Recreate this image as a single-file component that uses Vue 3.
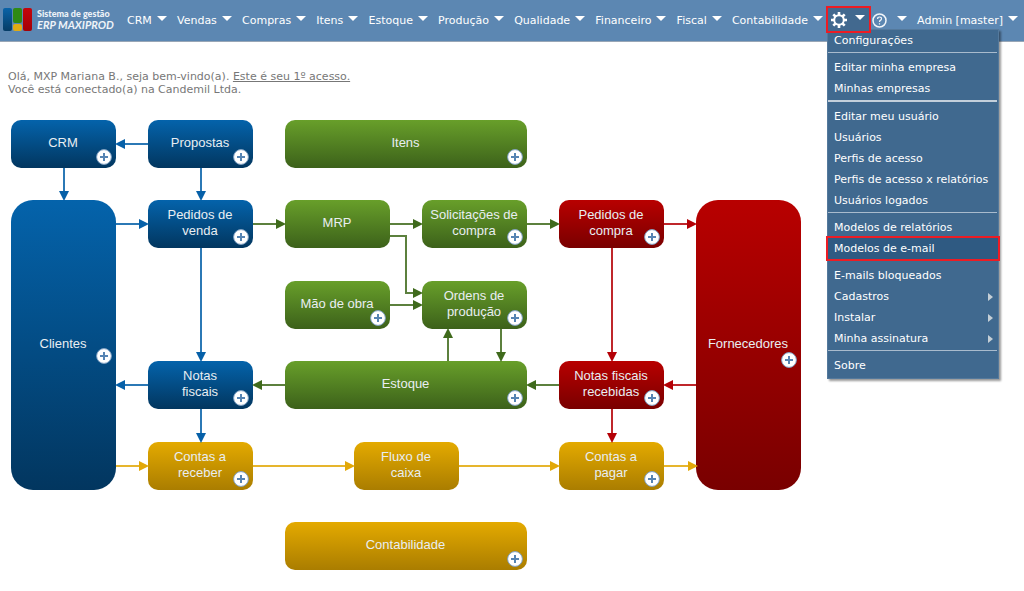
<script setup>
const menus = ['CRM', 'Vendas', 'Compras', 'Itens', 'Estoque', 'Produção', 'Qualidade', 'Financeiro', 'Fiscal', 'Contabilidade']

const groups = [
  [{ t: 'Configurações' }],
  [{ t: 'Editar minha empresa' }, { t: 'Minhas empresas' }],
  [{ t: 'Editar meu usuário' }, { t: 'Usuários' }, { t: 'Perfis de acesso' }, { t: 'Perfis de acesso x relatórios' }, { t: 'Usuários logados' }],
  [{ t: 'Modelos de relatórios' }, { t: 'Modelos de e-mail', on: true }],
  [{ t: 'E-mails bloqueados' }, { t: 'Cadastros', sub: true }, { t: 'Instalar', sub: true }, { t: 'Minha assinatura', sub: true }],
  [{ t: 'Sobre' }],
]

const nodes = [
  { t: ['CRM'], c: 'blue', x: 0, y: 0, plus: true },
  { t: ['Propostas'], c: 'blue', x: 137, y: 0, plus: true },
  { t: ['Itens'], c: 'green', x: 274, y: 0, w: 242, plus: true },
  { t: ['Clientes'], c: 'blue', x: 0, y: 80, h: 290, plus: true },
  { t: ['Pedidos de', 'venda'], c: 'blue', x: 137, y: 80, plus: true },
  { t: ['MRP'], c: 'green', x: 274, y: 80 },
  { t: ['Solicitações de', 'compra'], c: 'green', x: 411, y: 80, plus: true },
  { t: ['Pedidos de', 'compra'], c: 'red', x: 548, y: 80, plus: true },
  { t: ['Fornecedores'], c: 'red', x: 685, y: 80, h: 290, plus: true },
  { t: ['Mão de obra'], c: 'green', x: 274, y: 161, plus: true },
  { t: ['Ordens de', 'produção'], c: 'green', x: 411, y: 161, plus: true },
  { t: ['Notas', 'fiscais'], c: 'blue', x: 137, y: 241, plus: true },
  { t: ['Estoque'], c: 'green', x: 274, y: 241, w: 242, plus: true },
  { t: ['Notas fiscais', 'recebidas'], c: 'red', x: 548, y: 241, plus: true },
  { t: ['Contas a', 'receber'], c: 'gold', x: 137, y: 322, plus: true },
  { t: ['Fluxo de', 'caixa'], c: 'gold', x: 343, y: 322 },
  { t: ['Contas a', 'pagar'], c: 'gold', x: 548, y: 322, plus: true },
  { t: ['Contabilidade'], c: 'gold', x: 274, y: 402, w: 242, plus: true },
]

const place = (n) => ({
  left: n.x + 'px',
  top: n.y + 'px',
  width: (n.w || 105) + 'px',
  height: (n.h || 48) + 'px',
})

const colors = { blue: '#0660a8', green: '#3f6a1c', red: '#b40006', gold: '#e2a808' }
const links = [
  ['blue', [137, 24], [104, 24]],
  ['blue', [53, 48], [53, 81]],
  ['blue', [190, 48], [190, 81]],
  ['blue', [190, 128], [190, 242]],
  ['blue', [190, 289], [190, 323]],
  ['blue', [105, 104], [138, 104]],
  ['blue', [137, 265], [104, 265]],
  ['gold', [105, 346], [138, 346]],
  ['green', [242, 104], [275, 104]],
  ['green', [379, 104], [412, 104]],
  ['green', [379, 116], [395, 116], [395, 173], [412, 173]],
  ['green', [379, 185], [412, 185]],
  ['green', [516, 104], [549, 104]],
  ['green', [548, 265], [515, 265]],
  ['green', [274, 265], [241, 265]],
  ['green', [437, 241], [437, 208]],
  ['green', [490, 209], [490, 242]],
  ['red', [653, 104], [686, 104]],
  ['red', [601, 128], [601, 242]],
  ['red', [601, 289], [601, 323]],
  ['red', [685, 265], [652, 265]],
  ['gold', [242, 346], [344, 346]],
  ['gold', [448, 346], [549, 346]],
  ['gold', [653, 346], [687, 346]],
].map(([c, ...pts]) => {
  const [x, y] = pts[pts.length - 1]
  const [px, py] = pts[pts.length - 2]
  const dx = Math.sign(x - px)
  const dy = Math.sign(y - py)
  const bx = x - dx * 10
  const by = y - dy * 10
  return {
    color: colors[c],
    line: [...pts.slice(0, -1), [bx, by]].join(' '),
    head: `${x},${y} ${bx + dy * 5},${by + dx * 5} ${bx - dy * 5},${by - dx * 5}`,
  }
})
</script>

<template>
  <header class="bar">
    <a class="brand" href="#" aria-label="Sistema de gestão ERP MAXIPROD">
      <svg class="logo" width="30" height="24" viewBox="0 0 30 24" aria-hidden="true">
        <defs>
          <linearGradient id="lb" x2="0" y2="1"><stop stop-color="#0963a8" /><stop offset="1" stop-color="#063c66" /></linearGradient>
          <linearGradient id="lr" x2="0" y2="1"><stop stop-color="#c4050b" /><stop offset="1" stop-color="#a30006" /></linearGradient>
        </defs>
        <rect width="9" height="23" rx="2" fill="url(#lb)" />
        <rect x="10" width="9" height="15" rx="2" fill="#2f8a14" />
        <rect x="10" y="16" width="9" height="7" rx="2" fill="#e0ab13" />
        <rect x="20" width="9" height="23" rx="2" fill="url(#lr)" />
      </svg>
      <span class="name"><b>Sistema de gestão</b><i>ERP MAXIPROD</i></span>
    </a>
    <nav class="nav">
      <button v-for="m in menus" :key="m" class="item" type="button">{{ m }}<span class="caret"></span></button>
    </nav>
    <div class="settings">
      <button class="gear" type="button" aria-label="Configurações" aria-expanded="true">
        <svg width="16" height="16" viewBox="0 0 16 16" aria-hidden="true">
          <path d="M8 0V4M8 12V16M0 8H4M12 8H16M2.3 2.3L5 5M11 11L13.7 13.7M2.3 13.7L5 11M11 5L13.7 2.3" stroke="#fff" stroke-width="2.6" />
          <circle cx="8" cy="8" r="4.8" fill="#42698f" stroke="#fff" stroke-width="2" />
        </svg>
        <span class="caret"></span>
      </button>
      <div class="menu">
        <ul v-for="(g, i) in groups" :key="i" class="group">
          <li v-for="o in g" :key="o.t">
            <a href="#" :class="{ on: o.on }">{{ o.t }}<span v-if="o.sub" class="sub"></span></a>
          </li>
        </ul>
      </div>
    </div>
    <button class="item help" type="button" aria-label="Ajuda">
      <svg width="15" height="15" viewBox="0 0 15 15" aria-hidden="true">
        <circle cx="7.5" cy="7.5" r="6.5" fill="none" stroke="#f2f6fa" stroke-width="1.5" />
        <path d="M5.6 6Q5.6 4 7.6 4T9.5 5.8Q9.5 6.8 8.4 7.4Q7.5 7.9 7.5 9M7.5 10.2V11.6" fill="none" stroke="#f2f6fa" stroke-width="1.2" />
      </svg>
      <span class="caret"></span>
    </button>
    <button class="item user" type="button">Admin [master]<span class="caret"></span></button>
  </header>

  <main>
    <p class="hello">
      Olá, MXP Mariana B., seja bem-vindo(a). <a href="#">Este é seu 1º acesso.</a><br />
      Você está conectado(a) na Candemil Ltda.
    </p>
    <section class="flow" aria-label="Fluxo do sistema">
      <div v-for="n in nodes" :key="n.t.join(' ')" class="node" :class="[n.c, { tall: n.h }]" :style="place(n)">
        <a href="#"><span v-for="l in n.t" :key="l">{{ l }}</span></a>
        <button v-if="n.plus" class="plus" :class="{ low: n.t[0] === 'Fornecedores' }" type="button" :aria-label="'Adicionar em ' + n.t.join(' ')">
          <svg width="16" height="16" viewBox="0 0 16 16" aria-hidden="true">
            <circle cx="8" cy="8" r="7.4" fill="#fff" stroke="#7e9fc2" stroke-width="1" />
            <path d="M8 4V12M4 8H12" stroke="#5684b3" stroke-width="2" />
          </svg>
        </button>
      </div>
      <svg class="links" width="790" height="450" viewBox="0 0 790 450" aria-hidden="true">
        <g v-for="(l, i) in links" :key="i">
          <polyline :points="l.line" fill="none" :stroke="l.color" stroke-width="2" stroke-opacity="0.85" />
          <polygon :points="l.head" :fill="l.color" />
        </g>
      </svg>
    </section>
  </main>
</template>

<style>
body {
  background: #fff;
}
</style>

<style scoped>
.bar,
main,
.bar button {
  font-family: "DejaVu Sans", Verdana, sans-serif;
  font-size: 11px;
}
button {
  margin: 0;
  padding: 0;
  border: 0;
  background: none;
  color: inherit;
  cursor: pointer;
}
a {
  color: inherit;
}
.bar {
  display: flex;
  align-items: flex-start;
  height: 41px;
  background: #5c87b2;
  border-bottom: 1px solid #98a6b6;
  color: #fff;
}
.brand {
  display: flex;
  flex: none;
  gap: 4px;
  width: 124px;
  padding: 8px 0 0 3px;
  box-sizing: border-box;
  text-decoration: none;
}
.name {
  display: flex;
  flex-direction: column;
  font-family: Lato, sans-serif;
  font-weight: 700;
  line-height: 12px;
  white-space: nowrap;
  color: #eef3f8;
}
.name b {
  font-size: 9px;
  line-height: 11px;
}
.name i {
  font-size: 11px;
}
.nav {
  display: flex;
  flex: 1;
  justify-content: space-between;
}
.item {
  display: flex;
  align-items: center;
  gap: 5px;
  height: 40px;
  padding: 0 3px;
  white-space: nowrap;
}
.caret {
  border: 5px solid transparent;
  border-top-color: #fff;
  border-bottom: 0;
  margin-bottom: 4px;
}
.settings {
  position: relative;
  margin-top: 6px;
}
.gear {
  position: relative;
  z-index: 2;
  display: flex;
  align-items: center;
  gap: 8px;
  height: 27px;
  padding: 0 4px 0 3px;
  background: #42698f;
  border: 2px solid #ed1c24;
}
.bar .help {
  gap: 10px;
  padding: 0 7px 0 1px;
}
.bar .user {
  padding-right: 6px;
}
.menu {
  position: absolute;
  z-index: 1;
  top: 23px;
  left: 1px;
  width: 172px;
  box-sizing: border-box;
  padding-bottom: 2px;
  background: #40698f;
  border: 1px solid #54799c;
  box-shadow: 2px 2px 2px rgba(0, 0, 0, 0.4);
}
.group {
  list-style: none;
  margin: 0 1px 0 0;
  padding: 0;
}
.group + .group {
  margin-top: 1px;
  padding-top: 4px;
  border-top: 1px solid #a9bbcd;
}
.group:nth-child(3) {
  border-top: 2px solid #c3cfdb;
}
.group a {
  display: flex;
  align-items: center;
  justify-content: space-between;
  height: 21px;
  padding: 0 4px 0 6px;
  text-decoration: none;
  white-space: nowrap;
}
.group .on {
  background: #2f5a82;
  outline: 2px solid #ed1c24;
  margin-right: -1px;
}
.sub {
  border: 4px solid transparent;
  border-left: 5px solid #c5cfd6;
  border-right: 0;
}
.hello {
  margin: 0;
  padding: 28px 8px 0;
  line-height: 13px;
  color: #777;
}
.flow {
  position: relative;
  height: 450px;
  margin: 24px 0 0 11px;
}
.node {
  position: absolute;
  border-radius: 10px;
  font-family: "Liberation Sans", Arial, sans-serif;
  font-size: 13px;
  line-height: 16px;
  color: #e9eef2;
}
.node a {
  display: flex;
  flex-direction: column;
  align-items: center;
  justify-content: center;
  height: 100%;
  padding: 0 1px 2px 0;
  box-sizing: border-box;
  text-decoration: none;
  white-space: nowrap;
}
.tall {
  border-radius: 22px;
}
.blue {
  background: linear-gradient(#0463ab, #02365f);
}
.green {
  background: linear-gradient(#689f2a, #3c611a);
}
.red {
  background: linear-gradient(#b80000, #790000);
}
.gold {
  background: linear-gradient(#e4aa00, #aa7d00);
}
.plus {
  position: absolute;
  right: 4px;
  bottom: 3px;
  height: 16px;
}
.plus svg {
  display: block;
}
.tall .plus {
  bottom: 126px;
}
.tall .low {
  bottom: 122px;
}
.links {
  position: absolute;
  top: 0;
  left: 0;
  pointer-events: none;
}
</style>
